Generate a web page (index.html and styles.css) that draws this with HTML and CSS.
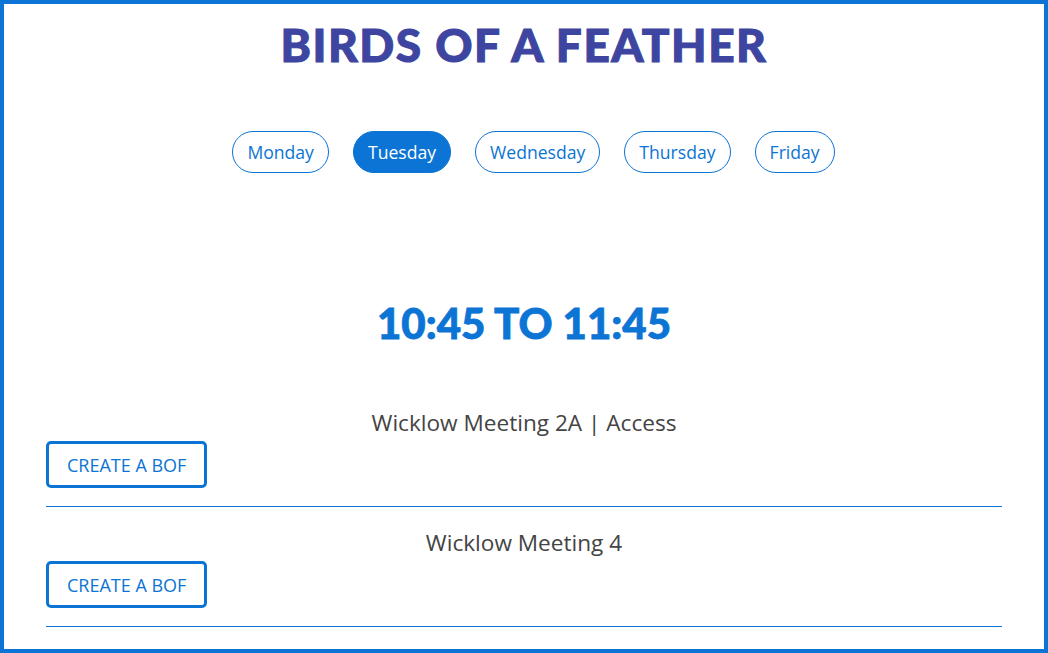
FILE: index.html
```html
<!DOCTYPE html>
<html lang="en">
  <head>
    <meta charset="UTF-8" />
    <meta name="viewport" content="width=device-width, initial-scale=1.0" />
    <title>Birds of a Feather</title>
    <link rel="stylesheet" href="styles.css">
  </head>
  <body>
    <h1 class="title">BIRDS OF A FEATHER</h1>

    <nav class="days">
      <a class="day" href="#">Monday</a>
      <a class="day active" href="#">Tuesday</a>
      <a class="day" href="#">Wednesday</a>
      <a class="day" href="#">Thursday</a>
      <a class="day" href="#">Friday</a>
    </nav>

    <section class="slot">
      <h2 class="slot-time">10:45 TO 11:45</h2>

      <div class="room">
        <p class="room-name">Wicklow Meeting 2A | Access</p>
        <button class="create">CREATE A BOF</button>
      </div>

      <div class="room">
        <p class="room-name">Wicklow Meeting 4</p>
        <button class="create">CREATE A BOF</button>
      </div>
    </section>
  </body>
</html>
```

FILE: styles.css
```css
html,
body {
  height: 100%;
}

body {
  margin: 0;
  box-sizing: border-box;
  border: 4px solid #0b74d4;
  overflow: hidden;
  font-family: "Open Sans", "Liberation Sans", sans-serif;
  background-color: #fff;
}

.title {
  margin: 11px 0 0;
  line-height: 60px;
  text-align: center;
  font-family: Lato, "DejaVu Sans", sans-serif;
  font-weight: 900;
  font-size: 46px;
  letter-spacing: 1.5px;
  -webkit-text-stroke: 1px #3d45a0;
  color: #3d45a0;
}

.days {
  display: flex;
  justify-content: center;
  gap: 24px;
  margin-top: 56px;
  padding-left: 19px;
}

.day {
  display: block;
  height: 40px;
  line-height: 40px;
  padding: 0 14px;
  border: 1px solid #0b74d4;
  border-radius: 21px;
  font-size: 17.6px;
  color: #0b74d4;
  text-decoration: none;
}

.day.active {
  background-color: #0b74d4;
  color: #fff;
}

.slot {
  margin: 0 42px;
}

.slot-time {
  margin: 125px 0 60px;
  line-height: 50px;
  text-align: center;
  font-family: Lato, "DejaVu Sans", sans-serif;
  font-weight: 900;
  font-size: 42px;
  -webkit-text-stroke: 0.8px #0b74d4;
  color: #0b74d4;
}

.room {
  padding-bottom: 18px;
  border-bottom: 1px solid #0b74d4;
  margin-bottom: 21px;
}

.room-name {
  margin: 0 0 3px;
  line-height: 30px;
  text-align: center;
  font-size: 22.6px;
  color: #444;
}

.create {
  display: block;
  height: 47px;
  padding: 0 18px;
  border: 3px solid #0b74d4;
  border-radius: 5px;
  background: #fff;
  font-family: "Open Sans", "Liberation Sans", sans-serif;
  font-size: 18px;
  color: #0b74d4;
}
```
